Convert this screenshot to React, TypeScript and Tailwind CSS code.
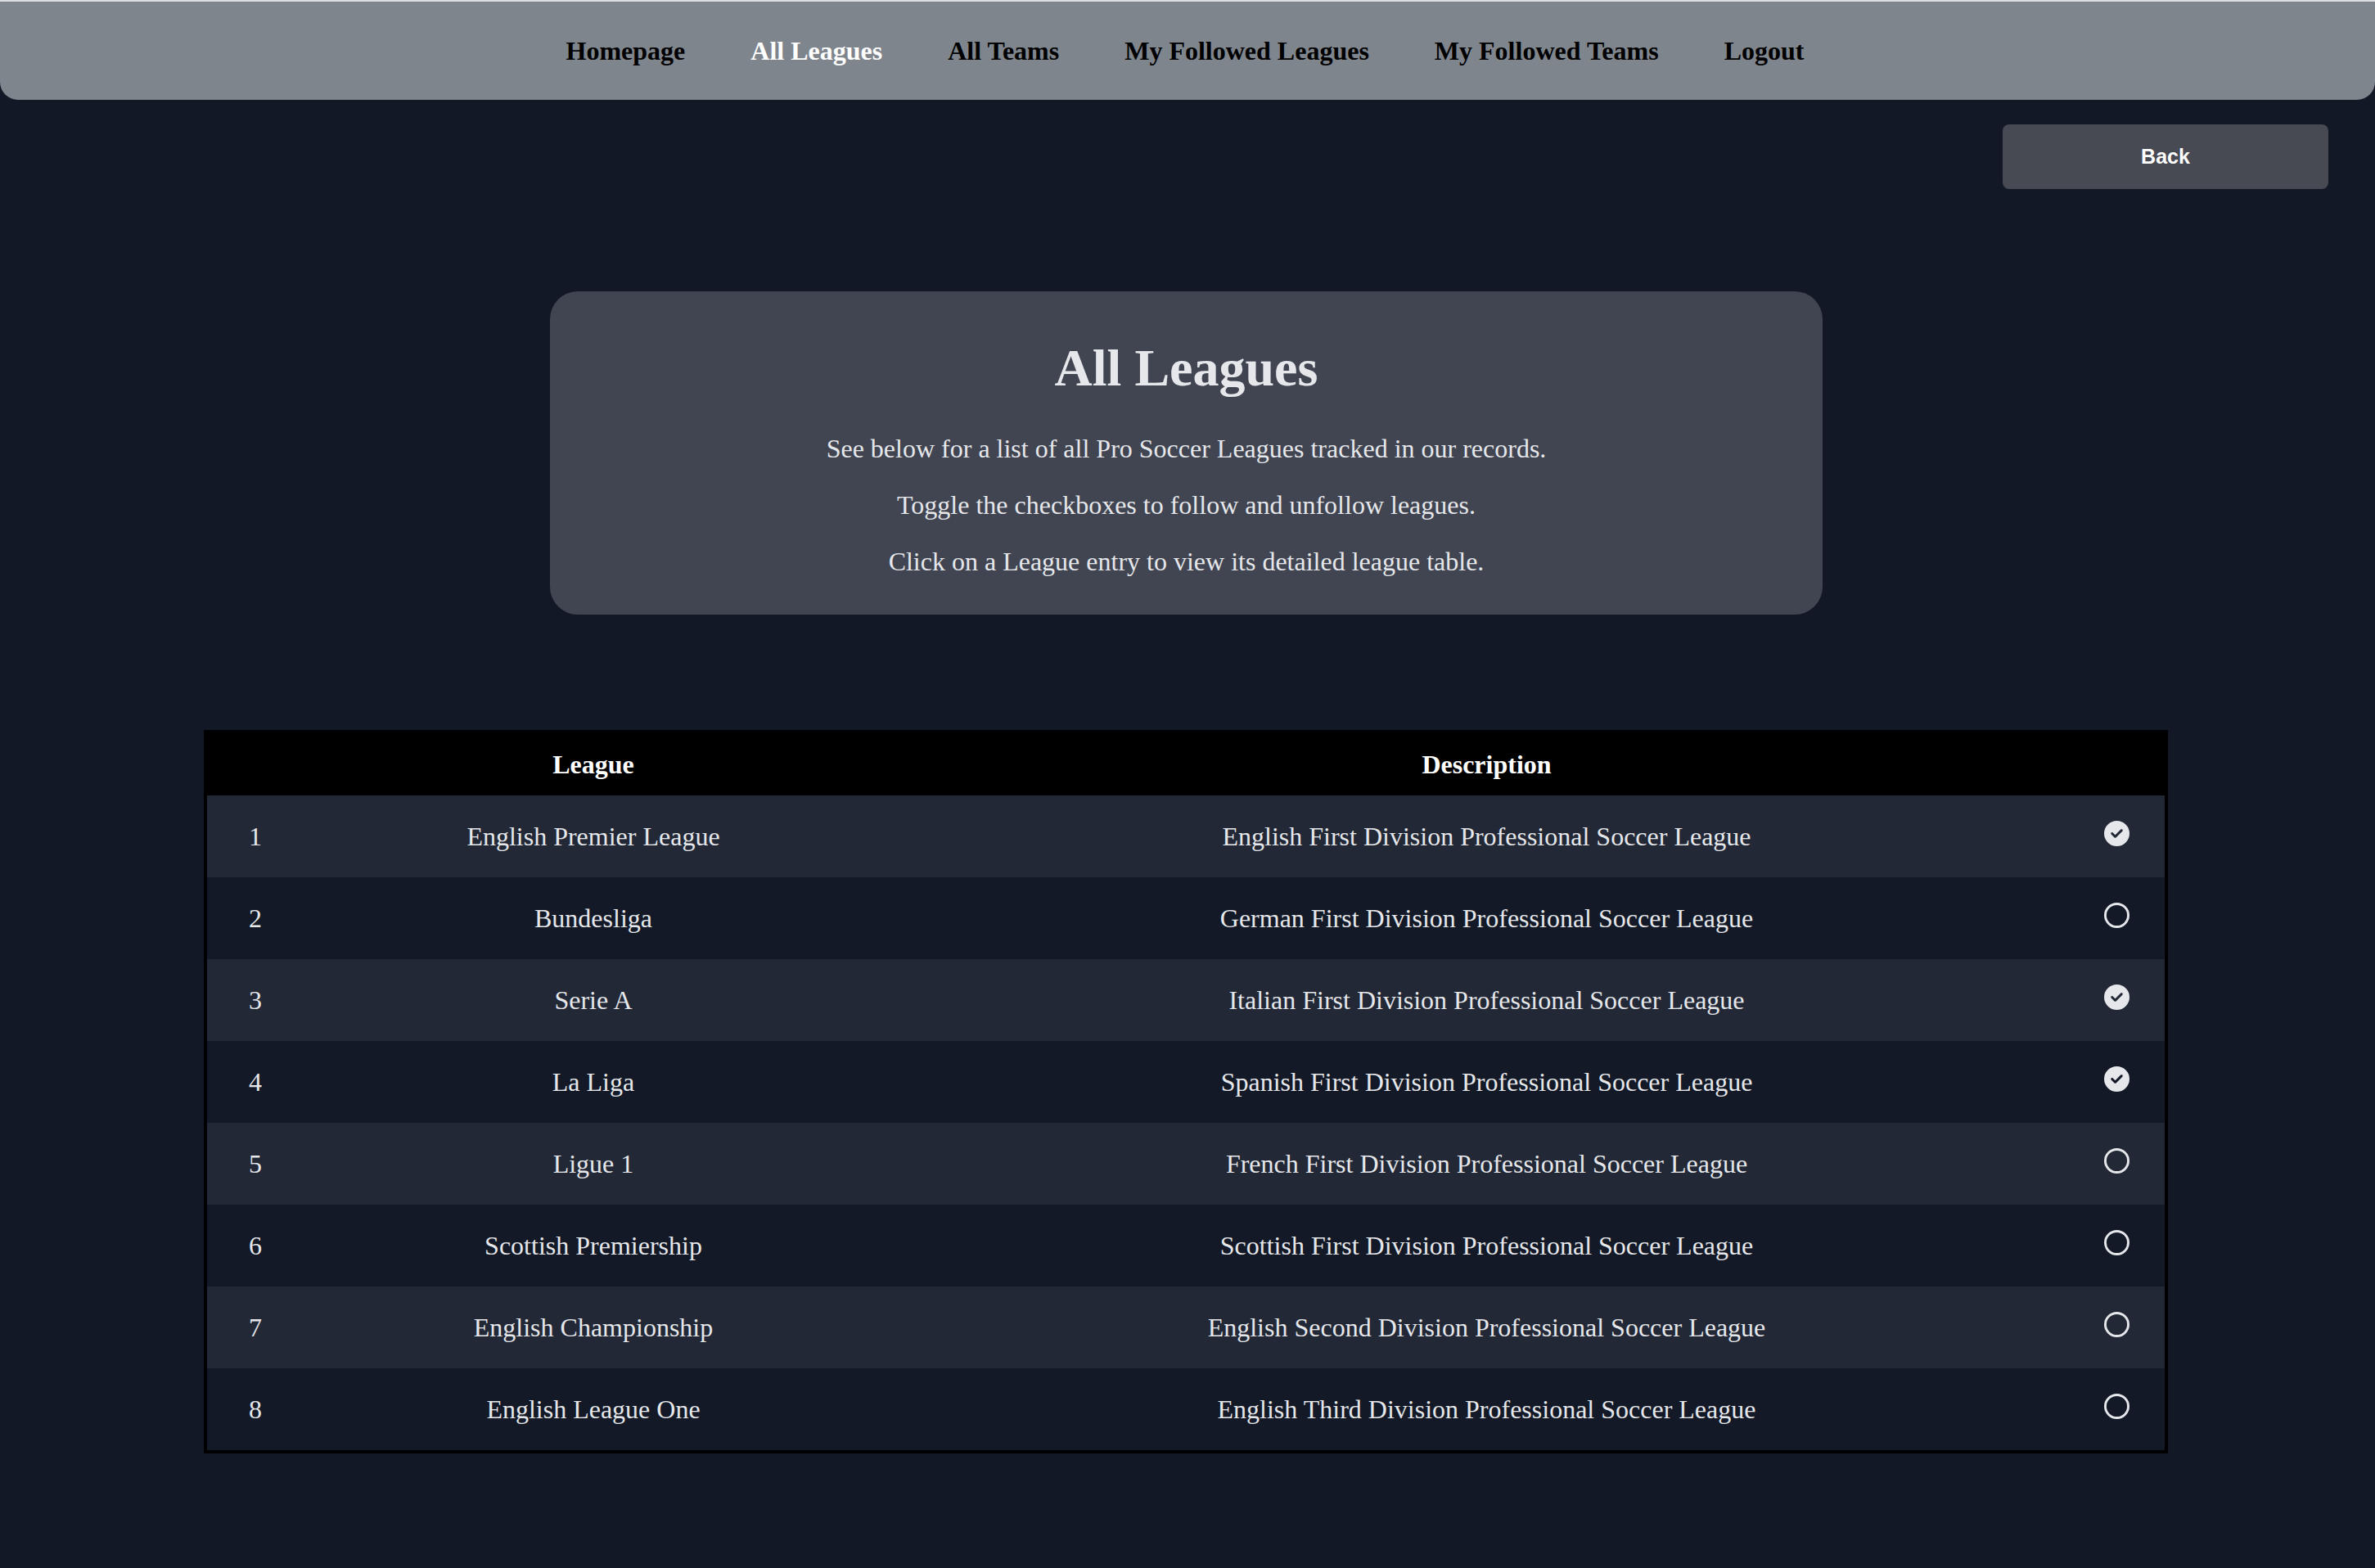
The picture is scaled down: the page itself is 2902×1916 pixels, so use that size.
import { FaCircleCheck, FaRegCircle } from "react-icons/fa6";

const navLinks = [
    { label: "Homepage", active: false },
    { label: "All Leagues", active: true },
    { label: "All Teams", active: false },
    { label: "My Followed Leagues", active: false },
    { label: "My Followed Teams", active: false },
    { label: "Logout", active: false },
];

const leagues = [
    { name: "English Premier League", description: "English First Division Professional Soccer League", followed: true },
    { name: "Bundesliga", description: "German First Division Professional Soccer League", followed: false },
    { name: "Serie A", description: "Italian First Division Professional Soccer League", followed: true },
    { name: "La Liga", description: "Spanish First Division Professional Soccer League", followed: true },
    { name: "Ligue 1", description: "French First Division Professional Soccer League", followed: false },
    { name: "Scottish Premiership", description: "Scottish First Division Professional Soccer League", followed: false },
    { name: "English Championship", description: "English Second Division Professional Soccer League", followed: false },
    { name: "English League One", description: "English Third Division Professional Soccer League", followed: false },
];

const Navbar = () => {
    return (
        <div>
            <div className="h-[2px] bg-[#dcdfe2]" />
            <nav className="h-[120px] bg-[#7f858d] rounded-b-[22px] flex items-center justify-center gap-[80px] pr-[6px]">
                {navLinks.map((link) => (
                    <a
                        key={link.label}
                        href="#"
                        className={`text-[32px] font-bold leading-none ${link.active ? "text-white" : "text-black"}`}
                    >
                        {link.label}
                    </a>
                ))}
            </nav>
        </div>
    );
};

const IntroCard = () => {
    return (
        <div className="w-[1555px] mx-auto bg-[#414551] rounded-[34px] pt-[62px] pb-[49px] text-center text-[#e5e7eb]">
            <h1 className="text-[64px] font-bold leading-[64px]">All Leagues</h1>
            <div className="mt-[50px] flex flex-col gap-[37px] text-[32px] leading-[32px]">
                <p>See below for a list of all Pro Soccer Leagues tracked in our records.</p>
                <p>Toggle the checkboxes to follow and unfollow leagues.</p>
                <p>Click on a League entry to view its detailed league table.</p>
            </div>
        </div>
    );
};

const LeagueTable = () => {
    return (
        <div className="w-[2400px] mx-auto border-4 border-black text-[32px]">
            <div className="h-[76px] bg-black grid grid-cols-[118px_708px_1475px_1fr] items-center text-white font-bold">
                <div />
                <div className="text-center">League</div>
                <div className="text-center">Description</div>
                <div />
            </div>
            {leagues.map((league, i) => (
                <div
                    key={league.name}
                    className={`h-[100px] grid grid-cols-[118px_708px_1475px_1fr] items-center text-[#e5e7eb] cursor-pointer ${i % 2 === 0 ? "bg-[#222836]" : "bg-[#131926]"}`}
                >
                    <div className="text-center">{i + 1}</div>
                    <div className="text-center">{league.name}</div>
                    <div className="text-center">{league.description}</div>
                    <div className="flex justify-center pr-[27px] mb-[8px]">
                        {league.followed ? (
                            <FaCircleCheck size={31} className="text-[#e5e7eb]" />
                        ) : (
                            <FaRegCircle size={31} className="text-[#e5e7eb]" />
                        )}
                    </div>
                </div>
            ))}
        </div>
    );
};

export default function App() {
    return (
        <div className="min-h-screen bg-[#131826] font-['Liberation_Serif',serif] pb-[140px]">
            <Navbar />
            <div className="flex justify-end pr-[57px] mt-[30px]">
                <button className="w-[398px] h-[79px] rounded-lg bg-[#474a52] text-white font-['Liberation_Sans',sans-serif] font-bold text-[25px]">
                    Back
                </button>
            </div>
            <div className="mt-[125px] pr-[3px]">
                <IntroCard />
            </div>
            <div className="mt-[141px] pr-[4px]">
                <LeagueTable />
            </div>
        </div>
    );
}
